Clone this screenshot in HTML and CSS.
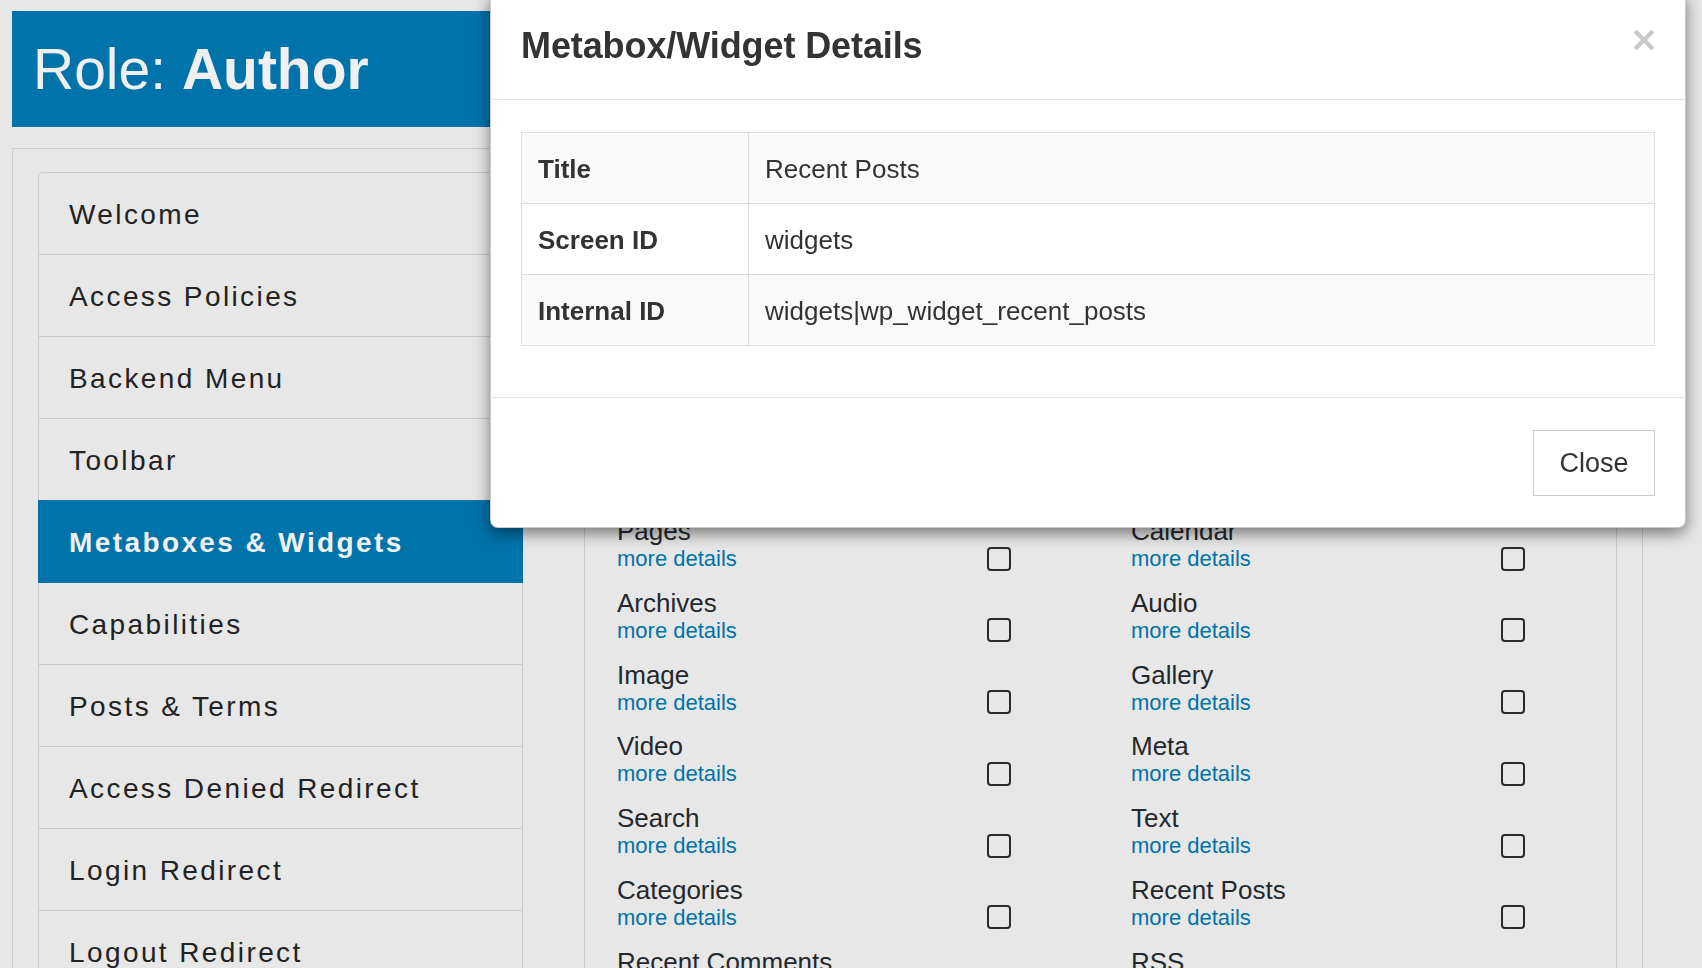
FILE: index.html
```html
<!DOCTYPE html>
<html lang="en">
<head>
<meta charset="utf-8">
<title>Role: Author — Metaboxes &amp; Widgets</title>
<link rel="stylesheet" href="styles.css">
</head>
<body>
<div class="page">
  <header class="role-header">
    <h1 class="role-title">Role: <strong>Author</strong></h1>
  </header>
  <div class="panel">
    <nav class="menu">
      <a class="menu-item">Welcome</a>
      <a class="menu-item">Access Policies</a>
      <a class="menu-item">Backend Menu</a>
      <a class="menu-item">Toolbar</a>
      <a class="menu-item active">Metaboxes &amp; Widgets</a>
      <a class="menu-item">Capabilities</a>
      <a class="menu-item">Posts &amp; Terms</a>
      <a class="menu-item">Access Denied Redirect</a>
      <a class="menu-item">Login Redirect</a>
      <a class="menu-item">Logout Redirect</a>
    </nav>
    <section class="content">
      <div class="content-intro"></div>
      <div class="widget-grid">
        <div class="widget"><div class="widget-text"><div class="widget-name">Pages</div><a class="more">more details</a></div><input type="checkbox" class="cb"></div>
        <div class="widget"><div class="widget-text"><div class="widget-name">Calendar</div><a class="more">more details</a></div><input type="checkbox" class="cb"></div>
        <div class="widget"><div class="widget-text"><div class="widget-name">Archives</div><a class="more">more details</a></div><input type="checkbox" class="cb"></div>
        <div class="widget"><div class="widget-text"><div class="widget-name">Audio</div><a class="more">more details</a></div><input type="checkbox" class="cb"></div>
        <div class="widget"><div class="widget-text"><div class="widget-name">Image</div><a class="more">more details</a></div><input type="checkbox" class="cb"></div>
        <div class="widget"><div class="widget-text"><div class="widget-name">Gallery</div><a class="more">more details</a></div><input type="checkbox" class="cb"></div>
        <div class="widget"><div class="widget-text"><div class="widget-name">Video</div><a class="more">more details</a></div><input type="checkbox" class="cb"></div>
        <div class="widget"><div class="widget-text"><div class="widget-name">Meta</div><a class="more">more details</a></div><input type="checkbox" class="cb"></div>
        <div class="widget"><div class="widget-text"><div class="widget-name">Search</div><a class="more">more details</a></div><input type="checkbox" class="cb"></div>
        <div class="widget"><div class="widget-text"><div class="widget-name">Text</div><a class="more">more details</a></div><input type="checkbox" class="cb"></div>
        <div class="widget"><div class="widget-text"><div class="widget-name">Categories</div><a class="more">more details</a></div><input type="checkbox" class="cb"></div>
        <div class="widget"><div class="widget-text"><div class="widget-name">Recent Posts</div><a class="more">more details</a></div><input type="checkbox" class="cb"></div>
        <div class="widget"><div class="widget-text"><div class="widget-name">Recent Comments</div><a class="more">more details</a></div><input type="checkbox" class="cb"></div>
        <div class="widget"><div class="widget-text"><div class="widget-name">RSS</div><a class="more">more details</a></div><input type="checkbox" class="cb"></div>
      </div>
    </section>
  </div>
</div>

<div class="modal" role="dialog">
  <div class="modal-header">
    <h4 class="modal-title">Metabox/Widget Details</h4>
    <button class="modal-x" aria-label="Close">
      <svg width="20" height="20" viewBox="0 0 20 20"><path d="M2.5 2.5 L17.5 17.5 M17.5 2.5 L2.5 17.5" stroke="#c9c9c9" stroke-width="4.2" stroke-linecap="square"/></svg>
    </button>
  </div>
  <div class="modal-body">
    <table class="details">
      <tbody>
        <tr><th>Title</th><td>Recent Posts</td></tr>
        <tr><th>Screen ID</th><td>widgets</td></tr>
        <tr><th>Internal ID</th><td>widgets|wp_widget_recent_posts</td></tr>
      </tbody>
    </table>
  </div>
  <div class="modal-footer">
    <button class="btn">Close</button>
  </div>
</div>
</body>
</html>
```
FILE: styles.css
```css
* { box-sizing: border-box; }

html, body { height: 100%; }

body {
  margin: 0;
  background: #e7e7e7;
  font-family: "Liberation Sans", Arial, sans-serif;
  color: #23282d;
  overflow: hidden;
}

.page {
  padding: 11px 0 0 12px;
}

.role-header {
  width: 620px;
  height: 116px;
  background: #0073aa;
  display: flex;
  align-items: center;
  padding-left: 21px;
}

.role-title {
  margin: 0;
  font-size: 57px;
  font-weight: 400;
  line-height: 1;
  color: #f0f0f0;
}

.role-title strong { font-weight: 700; }

.panel {
  margin-top: 21px;
  width: 1631px;
  height: 900px;
  border: 1px solid #cdcdcd;
  padding: 23px 25px 0;
  display: flex;
  align-items: flex-start;
  gap: 61px;
}

.menu {
  width: 485px;
  flex: none;
  display: flex;
  flex-direction: column;
  border: 1px solid #cbcbcb;
  border-bottom: 0;
  border-top-left-radius: 5px;
}

.menu-item {
  display: flex;
  align-items: center;
  height: 82px;
  padding: 3px 0 0 30px;
  border-bottom: 1px solid #cbcbcb;
  font-size: 28px;
  letter-spacing: 2.4px;
  color: #222;
  text-decoration: none;
}

.menu-item.active {
  margin: -1px -1px 0;
  height: 83px;
  padding-left: 31px;
  background: #0073aa;
  border-bottom-color: #0073aa;
  color: #f0f0f0;
  font-weight: 700;
}

.content {
  width: 1033px;
  flex: none;
  height: 860px;
  border: 1px solid #cdcdcd;
  padding-left: 32px;
}

.content-intro {
  height: 345px;
}

.widget-grid {
  display: grid;
  grid-template-columns: 514px 1fr;
  row-gap: 17.8px;
}

.widget {
  display: flex;
  align-items: flex-end;
}

.widget-text {
  width: 370px;
}

.widget-name {
  font-size: 26px;
  line-height: 27px;
  color: #23282d;
}

.more {
  display: block;
  font-size: 22px;
  line-height: 27px;
  color: #0073aa;
  text-decoration: none;
}

.cb {
  appearance: none;
  -webkit-appearance: none;
  width: 24px;
  height: 24px;
  margin: 0 0 1.5px;
  border: 2.6px solid #2a2a2a;
  border-radius: 4px;
  background: transparent;
}

/* modal */
.modal {
  position: fixed;
  left: 490px;
  top: -8px;
  width: 1196px;
  background: #fff;
  border: 1px solid rgba(0, 0, 0, 0.2);
  border-radius: 8px;
  box-shadow: 0 5px 16px rgba(0, 0, 0, 0.5);
  z-index: 10;
}

.modal-header {
  height: 107px;
  padding: 0 30px;
  border-bottom: 1px solid #e5e5e5;
  display: flex;
  align-items: center;
  justify-content: space-between;
}

.modal-title {
  margin: 0;
  font-size: 36px;
  font-weight: 700;
  color: #333;
  letter-spacing: -0.1px;
}

.modal-x {
  align-self: flex-start;
  margin-top: 37px;
  margin-right: 1px;
  padding: 0;
  border: 0;
  background: none;
  width: 20px;
  height: 20px;
  display: block;
}

.modal-x svg { display: block; }

.modal-body {
  padding: 32px 30px 31px;
}

.details {
  width: 100%;
  border-collapse: collapse;
  border: 1px solid #ddd;
  margin-bottom: 20px;
  font-size: 26px;
  color: #333;
}

.details tr { height: 71px; }

.details tr:nth-child(odd) { background: #f9f9f9; }

.details th,
.details td {
  border: 1px solid #ddd;
  padding: 2px 16px 0;
  text-align: left;
  vertical-align: middle;
}

.details th {
  width: 227px;
  font-weight: 700;
}

.details td { font-weight: 400; }

.modal-footer {
  padding: 32px 30px 31px;
  border-top: 1px solid #e5e5e5;
  display: flex;
  justify-content: flex-end;
}

.btn {
  width: 122px;
  height: 66px;
  border: 1px solid #ccc;
  background: #fff;
  font-family: "Liberation Sans", Arial, sans-serif;
  font-size: 27px;
  color: #333;
  padding: 0;
}
```
